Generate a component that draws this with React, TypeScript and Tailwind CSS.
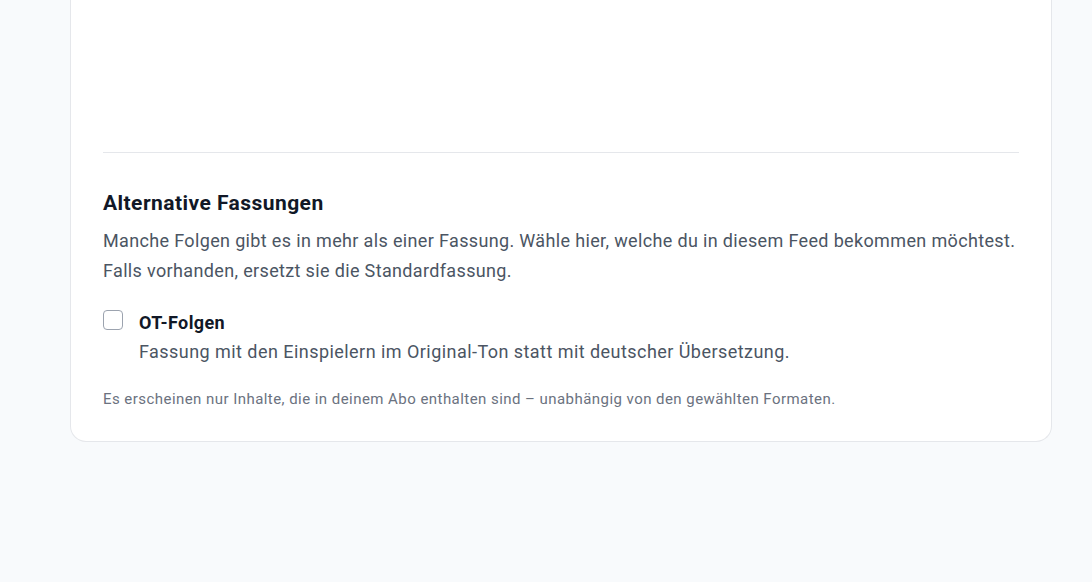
import React, { useState } from 'react';

const App: React.FC = () => {
  const [otChecked, setOtChecked] = useState(false);

  return (
    <div className="min-h-[582px] bg-[#f8fafc] px-[70px] pb-10" style={{ fontFamily: 'Roboto, "Liberation Sans", sans-serif' }}>
      <div className="w-[982px] rounded-b-2xl border-x border-b border-[#e5e7eb] bg-white px-8 pb-[31px]">
        {/* previous section (scrolled out of view) */}
        <div className="h-[153px] border-b border-[#e5e7eb]" />

        <section className="pt-9">
          <h2 className="text-[21px] leading-7 font-bold tracking-[0.45px] text-[#111827]">Alternative Fassungen</h2>
          <p className="mt-[9px] text-[18px] leading-[29.5px] tracking-[0.35px] text-[#4b5563]">
            Manche Folgen gibt es in mehr als einer Fassung. Wähle hier, welche du in diesem Feed bekommen möchtest.
            <br />
            Falls vorhanden, ersetzt sie die Standardfassung.
          </p>

          <label className="mt-[24px] flex cursor-pointer items-start gap-4">
            <input
              type="checkbox"
              checked={otChecked}
              onChange={(e) => setOtChecked(e.target.checked)}
              className="mt-[1px] h-5 w-5 shrink-0 cursor-pointer appearance-none rounded-[4px] border border-[#9ca3af] bg-white checked:border-[#111827] checked:bg-[#111827]"
            />
            <span className="flex flex-col">
              <span className="text-[18px] leading-7 font-bold tracking-[0.4px] text-[#111827]">OT-Folgen</span>
              <span className="text-[18px] leading-[30px] tracking-[0.45px] text-[#4b5563]">
                Fassung mit den Einspielern im Original-Ton statt mit deutscher Übersetzung.
              </span>
            </span>
          </label>

          <p className="mt-[21px] text-[15px] leading-[22px] tracking-[0.45px] text-[#6b7280]">
            Es erscheinen nur Inhalte, die in deinem Abo enthalten sind – unabhängig von den gewählten Formaten.
          </p>
        </section>
      </div>
    </div>
  );
};

export default App;
